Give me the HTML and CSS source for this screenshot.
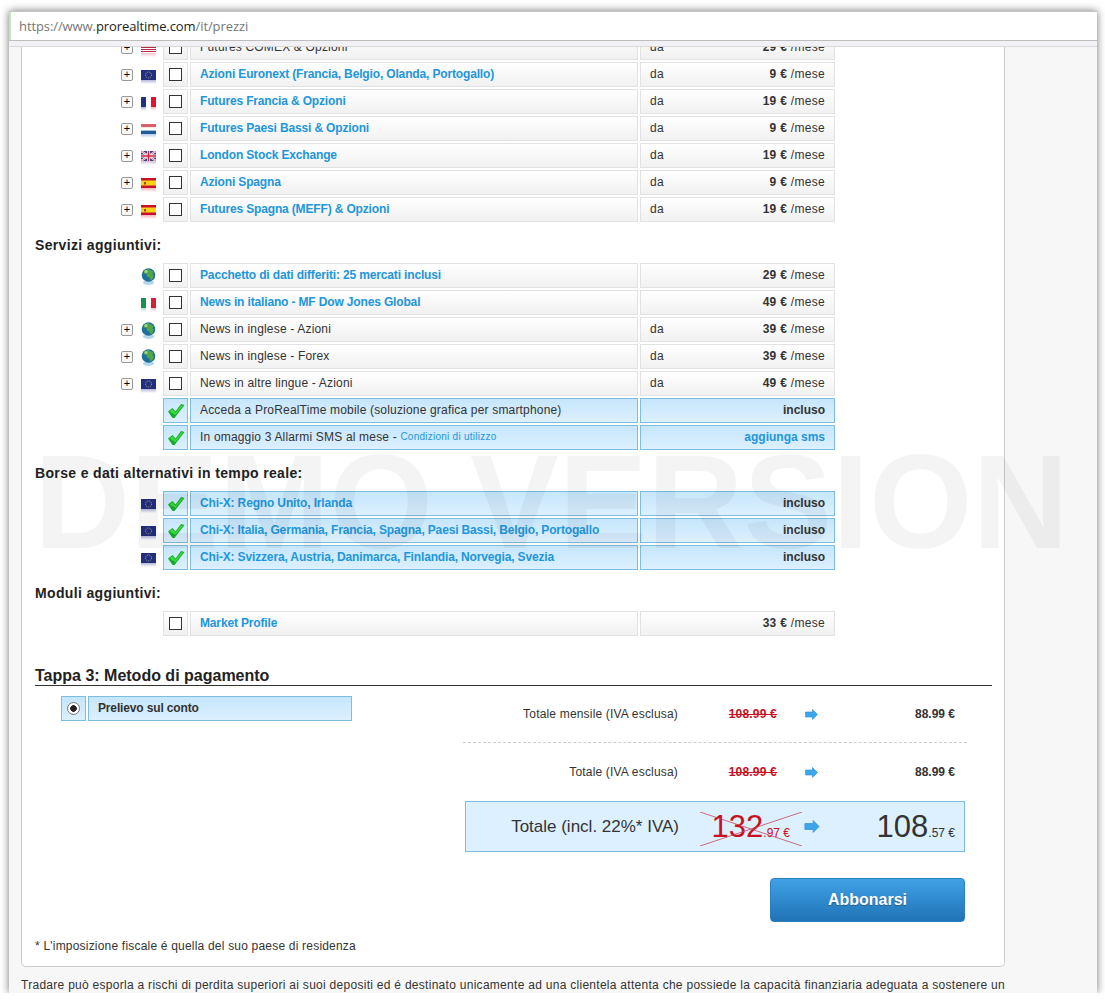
FILE: index.html
```html
<!DOCTYPE html>
<html lang="it">
<head>
    <meta charset="UTF-8">
    <meta name="viewport" content="width=device-width, initial-scale=1.0">
    <title>ProRealTime - Prezzi</title>
    <link rel="stylesheet" href="styles.css">
</head>
<body>
    <svg class="icon-defs" width="0" height="0" aria-hidden="true">
        <defs>
            <linearGradient id="fade" x1="0" y1="0" x2="0" y2="1">
                <stop offset="0" stop-color="#fff" stop-opacity="0.35"/>
                <stop offset="1" stop-color="#fff" stop-opacity="1"/>
            </linearGradient>
            <symbol id="flag-us" viewBox="0 0 15 14">
                <rect width="15" height="10" fill="#fff"/>
                <path d="M0 .5h15M0 2.5h15M0 4.5h15M0 6.500h15M0 8.500h15" stroke="#b82840"/>
                <rect width="7" height="4" fill="#37408c"/>
                <rect y="10" width="15" height="4" fill="#e8a0ac"/>
                <rect y="10" width="15" height="4" fill="url(#fade)"/>
            </symbol>
            <symbol id="flag-eu" viewBox="0 0 15 14">
                <rect width="15" height="10" fill="#222f80"/>
                <circle cx="7.5" cy="5" r="3" fill="none" stroke="#b6b472" stroke-dasharray="1 1"/>
                <rect y="10" width="15" height="4" fill="#8a92c4"/>
                <rect y="10" width="15" height="4" fill="url(#fade)"/>
            </symbol>
            <symbol id="flag-fr" viewBox="0 0 15 14">
                <rect width="5" height="10" fill="#22307f"/>
                <rect x="5" width="5" height="10" fill="#fff"/>
                <rect x="10" width="5" height="10" fill="#e2132e"/>
                <rect y="10" width="5" height="4" fill="#8a92c4"/>
                <rect x="10" y="10" width="5" height="4" fill="#f09aa6"/>
                <rect y="10" width="15" height="4" fill="url(#fade)"/>
            </symbol>
            <symbol id="flag-nl" viewBox="0 0 15 14">
                <rect width="15" height="3.4" fill="#d8606a"/>
                <rect y="3.4" width="15" height="3.2" fill="#fff"/>
                <rect y="6.6" width="15" height="3.4" fill="#1d5c9a"/>
                <rect y="10" width="15" height="4" fill="#8db0d2"/>
                <rect y="10" width="15" height="4" fill="url(#fade)"/>
            </symbol>
            <symbol id="flag-uk" viewBox="0 0 15 14">
                <rect width="15" height="10" fill="#39407f"/>
                <path d="M0 0l15 10M15 0L0 10" stroke="#fff" stroke-width="2"/>
                <path d="M0 0l15 10M15 0L0 10" stroke="#d4334c" stroke-width=".7"/>
                <path d="M7.5 0v10M0 5h15" stroke="#fff" stroke-width="3"/>
                <path d="M7.5 0v10M0 5h15" stroke="#d4203a" stroke-width="1.6"/>
                <rect y="10" width="15" height="4" fill="#b0a0c0"/>
                <rect y="10" width="15" height="4" fill="url(#fade)"/>
            </symbol>
            <symbol id="flag-es" viewBox="0 0 15 14">
                <rect width="15" height="10" fill="#c8102e"/>
                <rect y="2.5" width="15" height="5" fill="#fbd116"/>
                <rect x="3" y="4" width="2" height="2.5" fill="#a8432a"/>
                <rect y="10" width="15" height="4" fill="#e88a92"/>
                <rect y="10" width="15" height="4" fill="url(#fade)"/>
            </symbol>
            <symbol id="flag-it" viewBox="0 0 15 14">
                <rect width="5" height="10" fill="#17924f"/>
                <rect x="5" width="5" height="10" fill="#fff"/>
                <rect x="10" width="5" height="10" fill="#d81f36"/>
                <rect y="10" width="5" height="4" fill="#8fcca8"/>
                <rect x="10" y="10" width="5" height="4" fill="#f09aa6"/>
                <rect y="10" width="15" height="4" fill="url(#fade)"/>
            </symbol>
            <symbol id="globe" viewBox="0 0 15 17">
                <ellipse cx="7.5" cy="14.5" rx="5.5" ry="2.5" fill="#b4d6ea"/>
                <circle cx="7.5" cy="7" r="6.8" fill="#1f6f9e"/>
                <path d="M3 2.5l4-1.500 2 1 3.500 1.500-1 3 1.500 1-1.500 3.500-2 1.500-1-3-2.500-1-.5-2.500-2.500-.5z" fill="#52a64a"/>
                <circle cx="5" cy="3.500" r="1.500" fill="#c4e6c0" opacity=".7"/>
            </symbol>
            <symbol id="tick" viewBox="0 0 20 20">
                <path d="M2 10.500L6.500 7l3 3.500L15 3l3.500 1L8.500 17h-2z" fill="#14ac2a"/>
                <path d="M3.500 10.500L6.500 8.300l3 3.500L15.500 4l1.500.5-7.500 9.500z" fill="#3ed840"/>
            </symbol>
            <symbol id="arrow" viewBox="0 0 13 11">
                <path d="M.5 3h7V.5l5 5-5 5V8h-7z" fill="#3ea6ea" stroke="#2a8fd4" stroke-width=".6"/>
            </symbol>
        </defs>
    </svg>

    <div class="window">
        <div class="address-bar">
            <span class="url">https://www.<em>prorealtime.com</em>/it/prezzi</span>
        </div>
        <div class="bar-strip"></div>

        <div class="viewport">
            <div class="page">
                <div class="card">
                    <div class="row"><span class="slot"><span class="expand">+</span></span><svg class="flag"><use href="#flag-us"/></svg><span class="check"><i class="box"></i></span><div class="name">Futures COMEX &amp; Opzioni</div><div class="price"><span>da</span><span><b>29 €</b> /mese</span></div></div>
                    <div class="row"><span class="slot"><span class="expand">+</span></span><svg class="flag"><use href="#flag-eu"/></svg><span class="check"><i class="box"></i></span><div class="name link">Azioni Euronext (Francia, Belgio, Olanda, Portogallo)</div><div class="price"><span>da</span><span><b>9 €</b> /mese</span></div></div>
                    <div class="row"><span class="slot"><span class="expand">+</span></span><svg class="flag"><use href="#flag-fr"/></svg><span class="check"><i class="box"></i></span><div class="name link">Futures Francia &amp; Opzioni</div><div class="price"><span>da</span><span><b>19 €</b> /mese</span></div></div>
                    <div class="row"><span class="slot"><span class="expand">+</span></span><svg class="flag"><use href="#flag-nl"/></svg><span class="check"><i class="box"></i></span><div class="name link">Futures Paesi Bassi &amp; Opzioni</div><div class="price"><span>da</span><span><b>9 €</b> /mese</span></div></div>
                    <div class="row"><span class="slot"><span class="expand">+</span></span><svg class="flag"><use href="#flag-uk"/></svg><span class="check"><i class="box"></i></span><div class="name link">London Stock Exchange</div><div class="price"><span>da</span><span><b>19 €</b> /mese</span></div></div>
                    <div class="row"><span class="slot"><span class="expand">+</span></span><svg class="flag"><use href="#flag-es"/></svg><span class="check"><i class="box"></i></span><div class="name link">Azioni Spagna</div><div class="price"><span>da</span><span><b>9 €</b> /mese</span></div></div>
                    <div class="row"><span class="slot"><span class="expand">+</span></span><svg class="flag"><use href="#flag-es"/></svg><span class="check"><i class="box"></i></span><div class="name link">Futures Spagna (MEFF) &amp; Opzioni</div><div class="price"><span>da</span><span><b>19 €</b> /mese</span></div></div>

                    <h3 class="group-title">Servizi aggiuntivi:</h3>
                    <div class="row"><span class="slot"></span><svg class="flag globe"><use href="#globe"/></svg><span class="check"><i class="box"></i></span><div class="name link">Pacchetto di dati differiti: 25 mercati inclusi</div><div class="price end"><span><b>29 €</b> /mese</span></div></div>
                    <div class="row"><span class="slot"></span><svg class="flag"><use href="#flag-it"/></svg><span class="check"><i class="box"></i></span><div class="name link">News in italiano - MF Dow Jones Global</div><div class="price end"><span><b>49 €</b> /mese</span></div></div>
                    <div class="row"><span class="slot"><span class="expand">+</span></span><svg class="flag globe"><use href="#globe"/></svg><span class="check"><i class="box"></i></span><div class="name">News in inglese - Azioni</div><div class="price"><span>da</span><span><b>39 €</b> /mese</span></div></div>
                    <div class="row"><span class="slot"><span class="expand">+</span></span><svg class="flag globe"><use href="#globe"/></svg><span class="check"><i class="box"></i></span><div class="name">News in inglese - Forex</div><div class="price"><span>da</span><span><b>39 €</b> /mese</span></div></div>
                    <div class="row"><span class="slot"><span class="expand">+</span></span><svg class="flag"><use href="#flag-eu"/></svg><span class="check"><i class="box"></i></span><div class="name">News in altre lingue - Azioni</div><div class="price"><span>da</span><span><b>49 €</b> /mese</span></div></div>
                    <div class="row on"><span class="slot"></span><span class="flag"></span><span class="check"><svg class="tick"><use href="#tick"/></svg></span><div class="name">Acceda a ProRealTime mobile (soluzione grafica per smartphone)</div><div class="price end"><b>incluso</b></div></div>
                    <div class="row on"><span class="slot"></span><span class="flag"></span><span class="check"><svg class="tick"><use href="#tick"/></svg></span><div class="name">In omaggio 3 Allarmi SMS al mese - <a class="terms">Condizioni di utilizzo</a></div><div class="price end"><b class="add-sms">aggiunga sms</b></div></div>

                    <h3 class="group-title">Borse e dati alternativi in tempo reale:</h3>
                    <div class="row on"><span class="slot"></span><svg class="flag"><use href="#flag-eu"/></svg><span class="check"><svg class="tick"><use href="#tick"/></svg></span><div class="name link">Chi-X: Regno Unito, Irlanda</div><div class="price end"><b>incluso</b></div></div>
                    <div class="row on"><span class="slot"></span><svg class="flag"><use href="#flag-eu"/></svg><span class="check"><svg class="tick"><use href="#tick"/></svg></span><div class="name link">Chi-X: Italia, Germania, Francia, Spagna, Paesi Bassi, Belgio, Portogallo</div><div class="price end"><b>incluso</b></div></div>
                    <div class="row on"><span class="slot"></span><svg class="flag"><use href="#flag-eu"/></svg><span class="check"><svg class="tick"><use href="#tick"/></svg></span><div class="name link">Chi-X: Svizzera, Austria, Danimarca, Finlandia, Norvegia, Svezia</div><div class="price end"><b>incluso</b></div></div>

                    <h3 class="group-title">Moduli aggiuntivi:</h3>
                    <div class="row"><span class="slot"></span><span class="flag"></span><span class="check"><i class="box"></i></span><div class="name link">Market Profile</div><div class="price end"><span><b>33 €</b> /mese</span></div></div>

                    <h2 class="step-title">Tappa 3: Metodo di pagamento</h2>

                    <div class="payment">
                        <div class="method row on">
                            <span class="check"><i class="radio"></i></span>
                            <div class="name"><b>Prelievo sul conto</b></div>
                        </div>

                        <div class="totals">
                            <div class="total-row">
                                <span class="total-label">Totale mensile (IVA esclusa)</span>
                                <s class="total-old">108.99 €</s>
                                <svg class="arrow"><use href="#arrow"/></svg>
                                <b class="total-new">88.99 €</b>
                            </div>
                            <div class="total-sep"></div>
                            <div class="total-row">
                                <span class="total-label">Totale (IVA esclusa)</span>
                                <s class="total-old">108.99 €</s>
                                <svg class="arrow"><use href="#arrow"/></svg>
                                <b class="total-new">88.99 €</b>
                            </div>
                            <div class="grand-total">
                                <span class="grand-label">Totale (incl. 22%* IVA)</span>
                                <span class="grand-old">
                                    <span class="big">132</span>.97 €
                                    <svg class="cross" viewBox="0 0 102 34"><path d="M0 0L102 34M0 34L102 0" stroke="#c8404e" stroke-opacity=".75" fill="none"/></svg>
                                </span>
                                <svg class="arrow big-arrow"><use href="#arrow"/></svg>
                                <span class="grand-new"><span class="big">108</span>.57 €</span>
                            </div>
                            <button class="subscribe" type="button">Abbonarsi</button>
                        </div>
                    </div>

                    <p class="footnote">* L'imposizione fiscale é quella del suo paese di residenza</p>
                </div>
                <p class="disclaimer">Tradare può esporla a rischi di perdita superiori ai suoi depositi ed é destinato unicamente ad una clientela attenta che possiede la capacità finanziaria adeguata a sostenere un</p>
            </div>
            <div class="watermark">DEMO VERSION</div>
        </div>
    </div>
</body>
</html>
```

FILE: styles.css
```css
* {
    box-sizing: border-box;
}
body {
    margin: 0;
    background-color: #fff;
    font-family: "Liberation Sans", Arial, sans-serif;
    font-size: 12px;
    color: #333;
}
.icon-defs {
    position: absolute;
}
.window {
    width: 1088px;
    height: 982px;
    margin: 11px 0 0 9px;
    display: flex;
    flex-direction: column;
    overflow: hidden;
    background-color: #f7f7f7;
    box-shadow: 0 0 8px rgba(0,0,0,0.55);
}
.address-bar {
    height: 30px;
    flex: none;
    display: flex;
    align-items: center;
    padding-left: 10px;
    background-color: #fff;
    border-top: 1px solid #c4c4c4;
    border-bottom: 1px solid #bdbdbd;
    box-shadow: inset 2px 0 0 #c4e6bc;
}
.url {
    font-family: "Open Sans", sans-serif;
    font-size: 13px;
    letter-spacing: -0.09px;
    color: #777;
}
.url em {
    font-style: normal;
    color: #222;
}
.bar-strip {
    height: 6px;
    flex: none;
    background-color: #f2f2f6;
    border-bottom: 1px solid #d8d8d8;
}
.viewport {
    position: relative;
    flex: 1;
    overflow: hidden;
}
.page {
    margin-top: -12px;
    padding-left: 12px;
}
.card {
    width: 984px;
    padding: 0 12px 0 13px;
    background-color: #fff;
    border: 1px solid #ccc;
    border-top: 0;
    border-radius: 0 0 5px 5px;
}
.row {
    display: flex;
    align-items: stretch;
    height: 25px;
    margin-bottom: 2px;
}
.slot {
    width: 98px;
    display: flex;
    justify-content: flex-end;
    align-items: center;
}
.expand {
    width: 12px;
    height: 12px;
    border: 1px solid #999;
    border-radius: 2px;
    background-color: #f8f8f8;
    font-size: 11px;
    line-height: 9px;
    text-align: center;
    color: #000;
}
.flag {
    width: 15px;
    height: 14px;
    margin: 8px 7px 3px 8px;
    flex: none;
}
.flag.globe {
    height: 17px;
    margin-top: 5px;
}
.check {
    width: 25px;
    margin-right: 2px;
    flex: none;
    display: flex;
    align-items: center;
    justify-content: center;
    border: 1px solid #e2e2e2;
    background: linear-gradient(#fff, #f1f1f1);
}
.box {
    width: 13px;
    height: 13px;
    border: 1px solid #333;
    background-color: #fff;
}
.radio {
    width: 13px;
    height: 13px;
    border-radius: 50%;
    border: 1px solid #777;
    background: radial-gradient(circle, #222 0, #222 3px, #fff 3.6px);
}
.tick {
    width: 20px;
    height: 20px;
}
.name {
    width: 448px;
    margin-right: 2px;
    padding-left: 9px;
    line-height: 22px;
    white-space: nowrap;
    border: 1px solid #e2e2e2;
    background: linear-gradient(#fff, #f1f1f1);
    letter-spacing: 0.18px;
}
.name.link {
    font-weight: bold;
    color: #2196dc;
    letter-spacing: -0.15px;
}
.terms {
    font-size: 10px;
    color: #2196dc;
    letter-spacing: 0.25px;
    position: relative;
    top: -1px;
}
.price {
    width: 195px;
    display: flex;
    justify-content: space-between;
    padding: 0 9px;
    line-height: 22px;
    border: 1px solid #e2e2e2;
    background: linear-gradient(#fff, #f1f1f1);
    letter-spacing: 0.3px;
}
.price.end {
    justify-content: flex-end;
}
.row.on .price b {
    letter-spacing: 0;
}
.add-sms {
    color: #2196dc;
}
.row.on .check,
.row.on .name,
.row.on .price {
    border-color: #7dbde0;
    background: linear-gradient(#c6e6fc, #dcf0ff);
}
.group-title {
    height: 39px;
    margin: 0;
    padding-top: 14px;
    font-size: 14px;
    line-height: 15px;
    font-weight: bold;
    color: #222;
    letter-spacing: 0.35px;
}
.step-title {
    height: 20px;
    margin: 30px 0 10px;
    font-size: 16px;
    line-height: 19px;
    font-weight: bold;
    color: #222;
    border-bottom: 1px solid #333;
}
.payment {
    display: flex;
    justify-content: space-between;
    padding: 0 25px 0 26px;
}
.method .check {
    width: 25px;
}
.method .name {
    width: 264px;
    margin-right: 0;
    letter-spacing: -0.15px;
}
.totals {
    width: 504px;
}
.total-row {
    display: grid;
    grid-template-columns: 215px 99px 41px 1fr;
    align-items: center;
    height: 36px;
    padding-right: 12px;
}
.total-label {
    text-align: right;
    letter-spacing: 0.18px;
}
.total-old {
    text-align: right;
    font-weight: bold;
    color: #c8101e;
    letter-spacing: 0.2px;
}
.total-new {
    text-align: right;
}
.arrow {
    width: 13px;
    height: 11px;
    margin-left: 28px;
}
.total-sep {
    margin-top: 10px;
    margin-bottom: 11px;
    border-top: 1px dashed #ccc;
}
.grand-total {
    display: grid;
    grid-template-columns: 213px 111px 30px 1fr;
    align-items: center;
    width: 500px;
    height: 51px;
    margin: 11px 0 0 2px;
    padding-right: 9px;
    background-color: #dcf0ff;
    border: 1px solid #7dbde0;
}
.grand-label {
    text-align: right;
    font-size: 17px;
}
.grand-old {
    position: relative;
    text-align: right;
    color: #c8101e;
}
.cross {
    position: absolute;
    left: 21px;
    top: 3px;
    width: 102px;
    height: 34px;
}
.grand-new {
    text-align: right;
    color: #333;
}
.big {
    font-size: 31px;
}
.big-arrow {
    width: 16px;
    height: 13px;
    margin-left: 14px;
}
.subscribe {
    display: block;
    width: 195px;
    height: 44px;
    margin: 26px 0 0 307px;
    padding: 0;
    font-family: inherit;
    font-size: 16px;
    font-weight: bold;
    color: #fff;
    text-shadow: 0 1px 1px rgba(0,0,0,0.3);
    background: linear-gradient(#41a1e6, #1f73b5);
    border: 1px solid #2a7fbd;
    border-radius: 4px;
}
.footnote {
    margin: 17px 0 0;
    padding-bottom: 13px;
    line-height: 14px;
    letter-spacing: 0.2px;
}
.disclaimer {
    width: 990px;
    margin: 11px 0 0;
    line-height: 14px;
    letter-spacing: 0.28px;
}
.watermark {
    position: absolute;
    left: 25px;
    top: 380px;
    font-size: 133px;
    line-height: 150px;
    font-weight: bold;
    white-space: nowrap;
    color: rgba(0,0,0,0.045);
    pointer-events: none;
}
```
